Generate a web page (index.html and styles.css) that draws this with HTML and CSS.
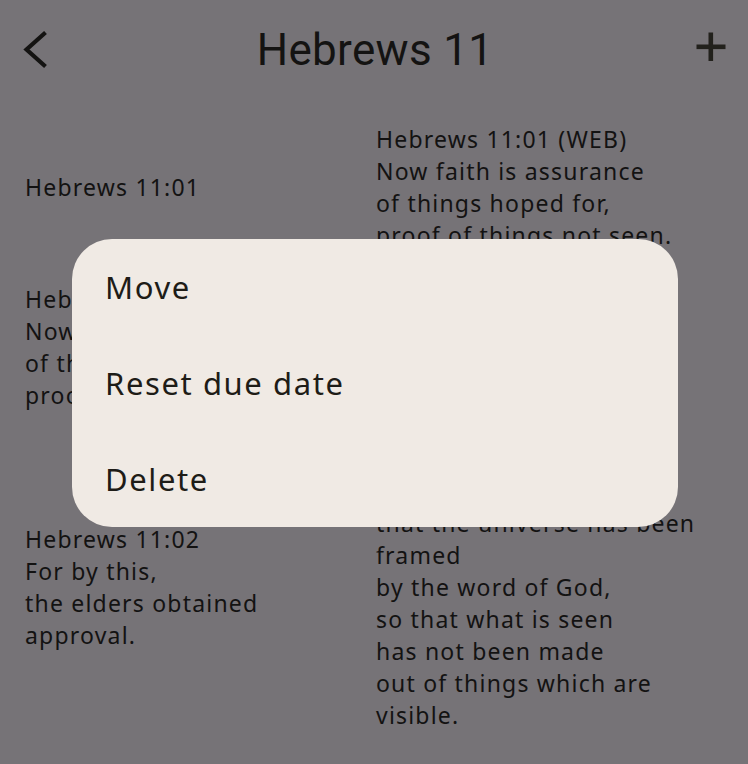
FILE: index.html
```html
<!DOCTYPE html>
<html>
<head>
<meta charset="utf-8">
<link rel="stylesheet" href="styles.css">
</head>
<body>
<div class="screen">
  <header class="appbar">
    <svg class="icon back" width="48" height="48" viewBox="0 0 48 48">
      <polyline points="23.5,7.5 4.5,24.5 23.5,41.5" fill="none" stroke="#141312" stroke-width="4.2"/>
    </svg>
    <h1 class="title">Hebrews 11</h1>
    <svg class="icon plus" width="32" height="32" viewBox="0 0 32 32">
      <rect x="13.5" y="1.5" width="4.6" height="28.5" fill="#22211c"/>
      <rect x="1.5" y="13.5" width="29" height="4.6" fill="#22211c"/>
    </svg>
  </header>
  <main class="list">
    <div class="row">
      <div class="cell">Hebrews 11:01</div>
      <div class="cell">Hebrews 11:01 (WEB)<br>Now faith is assurance<br>of things hoped for,<br>proof of things not seen.</div>
    </div>
    <div class="row">
      <div class="cell">Hebrews 11:01 (WEB)<br>Now faith is assurance<br>of things hoped for,<br>proof of things not seen.</div>
      <div class="cell">Hebrews 11:01</div>
    </div>
    <div class="row">
      <div class="cell">Hebrews 11:02<br>For by this,<br>the elders obtained<br>approval.</div>
      <div class="cell">Hebrews 11:03 (WEB)<br>By faith, we understand<br>that the universe has been<br>framed<br>by the word of God,<br>so that what is seen<br>has not been made<br>out of things which are<br>visible.</div>
    </div>
  </main>
  <div class="menu">
    <div class="menu-item">Move</div>
    <div class="menu-item">Reset due date</div>
    <div class="menu-item">Delete</div>
  </div>
</div>
</body>
</html>
```
FILE: styles.css
```css
html, body {
  margin: 0;
  padding: 0;
}
body {
  background: #767377;
  font-family: "Noto Sans", Roboto, sans-serif;
  color: #131212;
}
.screen {
  position: relative;
  width: 748px;
  height: 764px;
  overflow: hidden;
}
.appbar {
  height: 100px;
  display: grid;
  grid-template-columns: 1fr auto 1fr;
  align-items: center;
  padding: 0 22px;
}
.title {
  margin: 0 0 0 2px;
  font-family: Roboto, sans-serif;
  font-size: 44px;
  font-weight: 400;
  line-height: 52px;
  color: #141312;
  letter-spacing: 0.3px;
}
.back {
  display: block;
  margin-top: -2px;
}
.plus {
  display: block;
  justify-self: end;
  margin-top: -6px;
  margin-right: -1px;
}
.list {
  padding: 23px 24px 0 25px;
  display: flex;
  flex-direction: column;
  gap: 32px;
}
.row {
  display: grid;
  grid-template-columns: 351px 1fr;
  align-items: center;
}
.cell {
  font-size: 23px;
  line-height: 32px;
  letter-spacing: 1.2px;
  white-space: nowrap;
}
.menu {
  position: absolute;
  left: 72px;
  top: 239px;
  width: 606px;
  background: #f0eae4;
  border-radius: 40px;
  display: flex;
  flex-direction: column;
}
.menu-item {
  height: 96px;
  display: flex;
  align-items: center;
  padding-left: 33px;
  font-size: 31px;
  letter-spacing: 1.6px;
  color: #1e1c17;
}
```
